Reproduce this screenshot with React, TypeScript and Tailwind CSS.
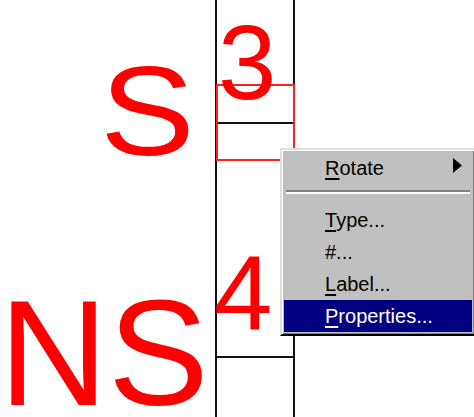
import React from "react";

const canvasFont = { fontFamily: '"Liberation Sans", Arial, sans-serif' };

function MenuItem({
  u,
  rest,
  active = false,
  arrow = false,
}: {
  u?: string;
  rest: string;
  active?: boolean;
  arrow?: boolean;
}) {
  return (
    <div
      className={`relative flex h-[32px] items-center pl-[41px] text-[20px] leading-[32px] ${
        active ? "bg-[#000080] text-white" : "text-black"
      }`}
    >
      <span>
        {u ? <span className="underline decoration-2 underline-offset-[3px]">{u}</span> : null}
        {rest}
      </span>
      {arrow ? (
        <svg
          className="absolute right-[10px] top-[6px]"
          width="9"
          height="15"
          viewBox="0 0 9 15"
        >
          <polygon points="0,0 9,7.5 0,15" fill="#000" />
        </svg>
      ) : null}
    </div>
  );
}

export default function App() {
  return (
    <div className="relative h-[417px] w-[474px] overflow-hidden bg-white" style={canvasFont}>
      {/* vertical black lines */}
      <div className="absolute left-[215px] top-0 h-[417px] w-[2px] bg-[#111]" />
      <div className="absolute left-[293px] top-0 h-[84px] w-[2px] bg-[#111]" />
      <div className="absolute left-[293px] top-[160px] h-[257px] w-[2px] bg-[#111]" />

      {/* red selection rectangle */}
      <div className="absolute left-[216px] top-[84px] h-[77px] w-[79px] border-2 border-[#ff2020]" />
      {/* black horizontals */}
      <div className="absolute left-[218px] top-[122px] h-[2px] w-[75px] bg-[#111]" />
      <div className="absolute left-[216px] top-[356px] h-[2px] w-[78px] bg-[#111]" />

      {/* red labels */}
      <span className="absolute left-[100px] top-[48px] origin-left scale-x-[1.12] text-[127px] leading-none text-[#ff0000]">S</span>
      <span className="absolute left-[-1px] top-[277px] text-[151px] leading-none text-[#ff0000]">NS</span>
      <span className="absolute left-[218px] top-[10px] text-[105px] leading-none text-[#ff0000]">3</span>
      <span className="absolute left-[214px] top-[241px] text-[105px] leading-none text-[#ff0000]">4</span>

      {/* context menu */}
      <div
        className="absolute left-[280px] top-[148px] w-[196px] border-2 border-t-[#dfdfdf] border-l-[#dfdfdf] border-r-black border-b-black bg-[#c0c0c0] p-[2px] shadow-[inset_1px_1px_#ffffff,inset_-1px_-1px_#808080]"
      >
        <MenuItem u="R" rest="otate" arrow />
        <div className="px-[2px] pb-[10px] pt-[6px]">
          <div className="h-[2px] bg-[#808080]" />
          <div className="h-[2px] bg-white" />
        </div>
        <MenuItem u="T" rest="ype..." />
        <MenuItem rest="#..." />
        <MenuItem u="L" rest="abel..." />
        <MenuItem u="P" rest="roperties..." active />
      </div>
    </div>
  );
}
